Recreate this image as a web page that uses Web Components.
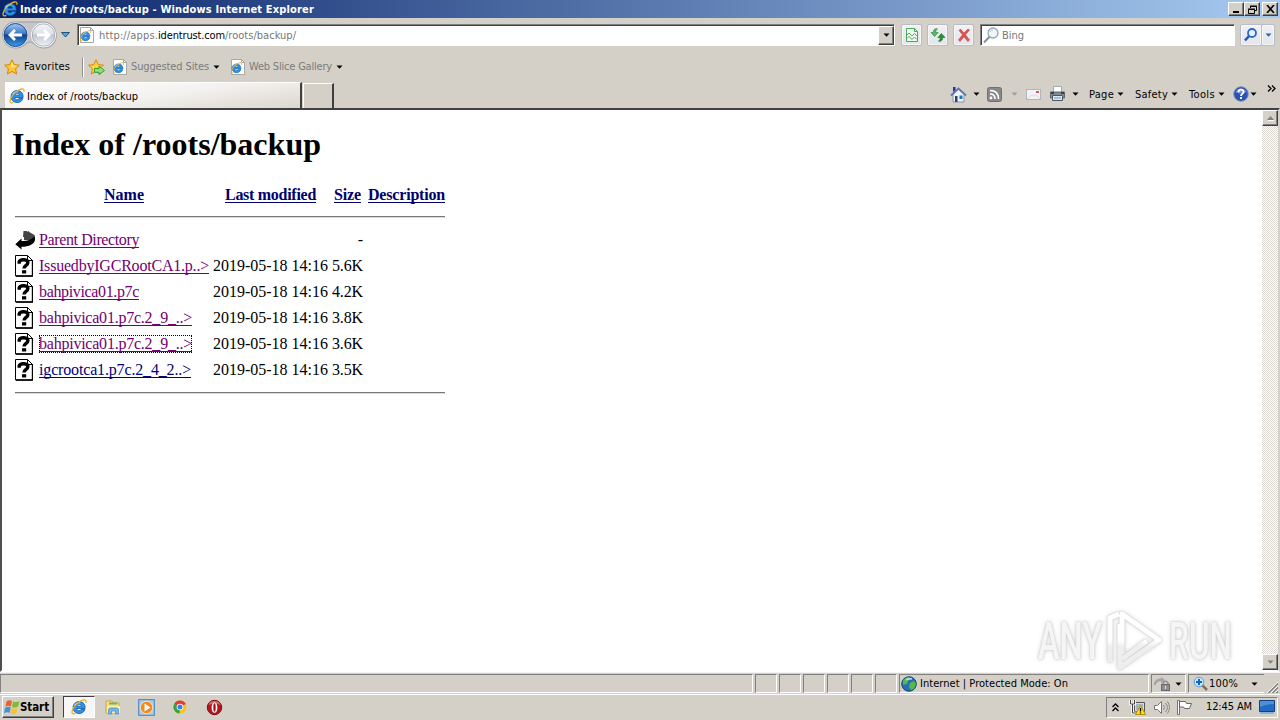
<!DOCTYPE html>
<html lang="en"><head><meta charset="utf-8"><title>Index of /roots/backup</title>
<style>html,body{margin:0;width:1280px;height:720px;overflow:hidden;background:#d4d0c8}</style></head>
<body>
<desktop-screen></desktop-screen>
<script>
const define=(name,html,after)=>customElements.define(name,class extends HTMLElement{
  constructor(){super();this.attachShadow({mode:'open'});}
  connectedCallback(){this.shadowRoot.innerHTML=typeof html==='function'?html(this):html;if(after)after(this);}
});

/* Text with a set width: letter spacing, or a horizontal squeeze, takes up the difference. */
define('fit-text',e=>`<style>:host{display:block;flex:none;white-space:pre;width:${e.getAttribute('w')}px}
:host([link]){background:linear-gradient(currentColor,currentColor) 0 16px/100% 1px no-repeat}
span{display:inline-block;transform-origin:0 50%}</style><span><slot></slot></span>`,e=>{
  const s=e.shadowRoot.querySelector('span'),w=+e.getAttribute('w'),n=s.getBoundingClientRect().width,c=e.textContent.length;
  if(e.hasAttribute('squeeze'))s.style.transform=`scaleX(${w/n})`;
  else s.style.letterSpacing=(w-n)/Math.max(1,c)+'px';
});

const ie=`<path d="M13.800 10.500H9.900c-.4.900-1 1.300-1.900 1.300-1.300 0-2.100-.9-2.200-2.300h8.300C14.300 5.200 12 2.600 8.300 2.600 4.700 2.600 2.100 5 2.100 8.600s2.500 5.900 6 5.900c2.900 0 5-1.500 5.700-4zM5.900 7.200C6.100 6 6.900 5.300 8.200 5.300c1.300 0 2.100.7 2.200 1.900z" fill="#2f93e4" stroke="#0f55a8" stroke-width=".8"/><path d="M3.500 6.500C4.700 4.200 7 3.500 9.200 3.900" stroke="#8fdcff" stroke-width="1.200" fill="none"/><path d="M4.200 14.300C1.200 15.800.300 13.800 1.700 10.600 3.700 6 8.500 1.800 12.400 1c2.400-.5 3 .9 2.300 2.800" fill="none" stroke="#e6b12c" stroke-width="1.300"/>`;
const page=`<path d="M1.500.500h10l3 3v12h-13z" fill="#fff" stroke="#a5a7a8"/><path d="M11.500.500v3h3" fill="none" stroke="#a5a7a8"/>`;
const star='M8 .800l2.200 4.800 5.200.600-3.800 3.600 1 5.200L8 12.400 3.400 15l1-5.200L.600 6.200l5.200-.600z';
const ICONS={
ie:[16,16,ie],
iepage:[16,16,page+`<g transform="translate(.500 3) scale(.74)">${ie}</g>`],
star:[16,16,`<path d="${star}" fill="#ffc62e" stroke="#d9860d"/><path d="M8 3l1.300 3.500 3.700.500-6 1.500z" fill="#fff0a0"/>`],
addstar:[17,16,`<path d="${star}" fill="#ffd13c" stroke="#d9860d"/><path d="M6.500 9.500H11V7.200l5.500 4.300L11 15.500V13.300H6.500z" fill="#8ee07c" stroke="#239a2b" stroke-width=".9"/>`],
nav:[57,30,`<defs><linearGradient id="b" x2="0" y2="1"><stop stop-color="#a9cdf2"/><stop offset=".45" stop-color="#3b78c6"/><stop offset=".5" stop-color="#0e3f92"/><stop offset="1" stop-color="#3fa6ee"/></linearGradient><linearGradient id="f" x2="0" y2="1"><stop stop-color="#f7f8fa"/><stop offset=".45" stop-color="#dcdfe6"/><stop offset=".5" stop-color="#bfc5cf"/><stop offset="1" stop-color="#f4f6f9"/></linearGradient></defs><path d="M14 2h28c17 0 18 26 1 26-8 0-10-6-14-6s-6 6-14 6C-3 28-2 2 14 2z" fill="#c5c5ca" stroke="#9b9ba4"/><circle cx="14.500" cy="15" r="12.200" fill="url(#b)" stroke="#e4eefa"/><circle cx="14.500" cy="15" r="11.500" fill="none" stroke="#234a87"/><circle cx="42.500" cy="15" r="12" fill="url(#f)" stroke="#fff"/><circle cx="42.500" cy="15" r="11.200" fill="none" stroke="#9ba2b0" stroke-width=".8"/><path d="M21 15H9.500M14 10l-5 5 5 5" stroke="#fff" stroke-width="2.800" fill="none"/><path d="M36 15h11M43 10l5 5-5 5" stroke="#fff" stroke-width="2.800" fill="none"/>`],
bluedown:[11,8,`<path d="M1.500 1.500h8L5.500 6z" fill="#5ba3d4" stroke="#1d5384"/>`],
down:[7,4,`<path d="M.500.500h6l-3 3.200z" fill="currentColor"/>`],
up:[7,5,`<path d="M0 4h7L3.500 0z" fill="#808080"/><path d="M1 4.500h7" stroke="#fff"/>`],
compat:[16,16,`<path d="M2.500 1.500h8l3 3v10h-11z" fill="#effaef" stroke="#49a85a"/><path d="M10.500 1.500v3h3" fill="none" stroke="#49a85a"/><path d="M3 8l2-2 3 3 2.500-2.500L13 9M3 11.500l2-2 3 3 2.500-2.500L13 12.500" stroke="#4bad58" fill="none"/>`],
refresh:[16,16,`<path d="M6.500 1.500C4 2 3.300 3.500 3.300 5.500H1l3.600 4 3.600-4H5.800C5.800 4 6 3 7.500 2z" fill="#5cb860" stroke="#278335" stroke-width=".6"/><path d="M9.500 14.500c2.500-.5 3.200-2 3.200-4H15l-3.600-4-3.600 4h2.400c0 1.500-.2 2.500-1.700 3.500z" fill="#2c8e3a" stroke="#1c702b" stroke-width=".6"/>`],
stop:[16,16,`<path d="M3 3.500l1.500-1.500L8 6l4-4 1.500 1L9.500 7.700l4 5.300-1.700 1.500L8 9.800l-4 4.700L2.500 13l4-5.200z" fill="#df5550" stroke="#b92f31" stroke-width=".5"/>`],
lens:[17,17,`<circle cx="10" cy="6" r="5" fill="#f2f6fa" stroke="#98a5b2" stroke-width="1.300"/><path d="M6.500 9.800L1 15.500" stroke="#889099" stroke-width="2"/><path d="M7 5q1-2 3-2" stroke="#b4c9dd" fill="none"/>`],
bluelens:[16,16,`<circle cx="9" cy="6" r="4" fill="#e5f2ff" stroke="#2c67c8" stroke-width="1.800"/><path d="M6 9l-4 4.500" stroke="#2558b8" stroke-width="2.600"/>`],
home:[17,17,`<path d="M3 8v8h11V8L8.500 3z" fill="#eef1f6" stroke="#8a97ab"/><path d="M1 9.500L8.500 2.500 16 9.500" fill="none" stroke="#5a78b4" stroke-width="1.800"/><path d="M3 1h2.500v3L3 6z" fill="#2a2fa8"/><path d="M5 10h2.500v6H5z" fill="#303f70"/><path d="M9.500 9.500h3v3.500h-3z" fill="#1e78b4"/>`],
rss:[15,15,`<rect x=".500" y=".500" width="14" height="14" rx="2" fill="#898989" stroke="#707070"/><circle cx="4" cy="11" r="1.400" fill="#fff"/><path d="M3 7q5 0 5 5M3 3.500q8.500 0 8.500 8.500" stroke="#fff" stroke-width="1.700" fill="none"/>`],
mail:[15,11,`<rect x=".500" y=".500" width="14" height="10" fill="#f3f3f5" stroke="#b4b4bc"/><path d="M1 10l5-4 2 1 2-1 4 4" fill="none" stroke="#dadae0"/><path d="M10 2h3v2h-3z" fill="#cc5c68"/>`],
printer:[17,16,`<path d="M4.500.500h8v6h-8z" fill="#fff" stroke="#9faab5"/><path d="M1.500 6h14v6h-14z" fill="#848a91" stroke="#5e656c"/><path d="M2 7h3M12 7h3" stroke="#3b4047" stroke-width="2"/><path d="M3.500 9.500h10v5h-10z" fill="#dce9f4" stroke="#4e5660"/><path d="M5 12h7" stroke="#5c9ad0"/>`],
help:[16,16,`<circle cx="8" cy="8" r="7.300" fill="#2c51b4" stroke="#8294c0"/><path d="M2.500 6a6 6 0 0 1 11 0Q8 9 2.500 6z" fill="#6f92da"/><path d="M5.500 6.200C5.500 2.800 10.500 3 10.500 6 10.500 8 8 7.800 8 10" stroke="#fff" stroke-width="1.800" fill="none"/><path d="M7 11h2v2H7z" fill="#fff"/>`],
chev:[9,7,`<path d="M1 .500l3 3-3 3M5 .500l3 3-3 3" stroke="#000" stroke-width="1.300" fill="none"/>`],
chevup:[7,9,`<path d="M.500 4l3-3 3 3M.500 8l3-3 3 3" stroke="#000" stroke-width="1.300" fill="none"/>`],
back:[21,20,`<path d="M8.500 1h3l1 .800 1-.800 1.500 1.500L19.500 5v5H9V7H8z" fill="#444"/><path d="M19.700 5.500C18.500 9 13 11 6.500 11V8.500L.300 14.300l6.200 5.200v-2.700C14 16.800 20 14 20 9.500z" fill="#000"/>`],
unknown:[18,22,`<path d="M.500.500h12l5 5v15.500H.500z" fill="#fff" stroke="#000"/><path d="M1 21h16.500V5" stroke="#000" fill="none" stroke-width="1.400"/><path d="M12.500.500v5h5" fill="none" stroke="#000"/><path d="M4.200 8.700V7C5 3.800 13 3.800 12.900 7.700 12.800 10.300 9 10.500 9 13.500" fill="none" stroke="#000" stroke-width="3.400"/><path d="M7 15.200h4.200v3.300H7z"/>`],
globe:[16,16,`<circle cx="8" cy="8" r="7.300" fill="#2270b8" stroke="#174774"/><path d="M2 5Q4 1 8 1l2 2-3 2-1 3-4 1zM9 7l4-2 2 3-2 5-3 1-2-3z" fill="#58b848"/><path d="M5 4q3-2 6-1" stroke="#b7e7ff" fill="none" stroke-width="1.500"/>`],
lock:[18,14,`<path d="M0 8Q3 2 8 3" stroke="#a4a4a4" stroke-width="2.500" fill="none"/><path d="M7 0l4 3-4 3z" fill="#a4a4a4"/><path d="M9 8V6q2.500-3.500 5 0v2" stroke="#888" fill="none" stroke-width="1.400"/><rect x="7.500" y="7.500" width="8" height="6" fill="#8f8f8f" stroke="#686868"/><path d="M11.500 9v3" stroke="#ddd"/>`],
zoom:[15,15,`<circle cx="6" cy="6" r="4.800" fill="#c8e6fb" stroke="#5ba0da"/><path d="M6 3v6M3 6h6" stroke="#1263c4" stroke-width="2"/><path d="M9.500 9.500L14 14" stroke="#8b6b51" stroke-width="2.500"/>`],
grip:[12,12,`<path d="M1 12L12 1M5 12l7-7M9 12l3-3" stroke="#fff" stroke-width="1"/><path d="M2 12.500L12.500 2M6 12.500L12.500 6M10 12.500L12.500 10" stroke="#808080" stroke-width="1.400"/>`],
win:[16,16,`<path d="M2.500 2.500Q5 .500 8 2L7 7.500Q4 6 1.300 8z" fill="#e9652c"/><path d="M9 2.500q3 1.200 6.500-.300L14 7.700q-3 1.500-6 .200z" fill="#83b93b"/><path d="M1 9q3-2 5.800-.500L5.500 14Q3 12.500 0 14.500z" fill="#4591d7"/><path d="M7.700 9q3 1.500 6 0L12.300 14.500q-3 1.500-5.800-.200z" fill="#f3c62e"/>`],
folder:[18,16,`<path d="M2 2h6l1 2h6v10H2z" fill="#f5df86" stroke="#cba942"/><path d="M5 4.500h8" stroke="#72b850" stroke-width="2"/><path d="M3 7h13v7H3z" fill="#fbeeb0"/><path d="M4.500 15v-4q0-2 2-2h6q2 0 2 2v4h-3v-3h-4v3z" fill="#73b9e9" stroke="#3e88bf" stroke-width=".7"/>`],
media:[17,17,`<rect x=".700" y=".700" width="15.600" height="15.600" fill="#a7cdeb" stroke="#3f80bf"/><circle cx="8.500" cy="8.500" r="6.200" fill="#f28a1d" stroke="#fff1d4" stroke-width=".8"/><path d="M6.500 4.500l6 4-6 4z" fill="#fff"/>`],
chrome:[16,16,`<circle cx="8" cy="8" r="6.600" fill="#f8c51d"/><path d="M8 8L2.300 4.700A6.600 6.600 0 0 1 13.800 5z" fill="#df3b2f"/><path d="M8 8L2.300 4.700A6.600 6.600 0 0 0 7.500 14.600z" fill="#2fa34b"/><circle cx="8" cy="8" r="3.300" fill="#fff"/><circle cx="8" cy="8" r="2.500" fill="#3f7ddd"/>`],
opera:[17,17,`<circle cx="8.500" cy="8.500" r="7.200" fill="#b5161c" stroke="#7c0d11"/><path d="M2.500 6q1-4 6-4t6 4q-6-3-12 0z" fill="#dd6468"/><ellipse cx="8.500" cy="8.500" rx="2.900" ry="5.300" fill="#fff"/><ellipse cx="8.500" cy="8.500" rx="1.200" ry="4.200" fill="#a3141a"/>`],
net:[17,16,`<path d="M5.500 3.500h10v9h-10z" fill="#d6dadd" stroke="#555"/><path d="M7 5h7v6H7z" fill="#a9b4bc"/><path d="M1.500 1v4h4V1M3.500 5v9H9" fill="none" stroke="#fff" stroke-width="2.500"/><path d="M1.500 1v4h4V1M3.500 5v9H9" fill="none" stroke="#444"/><path d="M11.500 6.500l5 9h-10z" fill="#ffdb21" stroke="#b29110"/><path d="M11.500 9v3.500M11.500 13.500v1" stroke="#000" stroke-width="1.300"/>`],
speaker:[17,15,`<path d="M1.500 5.500h3l4-4v12l-4-4h-3z" fill="#fff" stroke="#777"/><path d="M10.500 5q2 2.500 0 5M12.500 3q4 4.500 0 9M14.500 1.500q4 6 0 12" fill="none" stroke="#888"/>`],
flag:[17,16,`<path d="M1.500 1.500h2v14h-2z" fill="#fff" stroke="#666" stroke-width=".9"/><path d="M3.500 2.500h6l1 2h5l-2 5h-5l-1-1.500h-4z" fill="#fff" stroke="#666"/>`],
desk:[16,14,`<path d="M.500.500h15v11H.500z" fill="#266bc3" stroke="#163f80"/><path d="M1 1h14v3Q7 4 1 7z" fill="#4f8fd6"/><path d="M1 13h14" stroke="#73a7d9" stroke-width="1.500"/>`],
min:[8,8,`<path d="M1 7h6" stroke="#000" stroke-width="2"/>`],
restore:[9,9,`<path d="M2.500 3V1.500h6v4H7M2 1h7M.500 4.500h6v4h-6zM0 4h7" fill="none" stroke="#000"/>`],
close:[9,8,`<path d="M1 0l7 8M8 0L1 8" stroke="#000" stroke-width="1.700"/>`]
};
define('ui-icon',e=>{const[w,h,b]=ICONS[e.getAttribute('name')];return `<style>:host{display:block;flex:none;width:${w}px;height:${h}px}svg{display:block}</style><svg width="${w}" height="${h}" viewBox="0 0 ${w} ${h}">${b}</svg>`;});

/* Classic raised button face. */
define('raised-button',`<style>:host{display:flex;flex:none;align-items:center;justify-content:center;box-sizing:border-box;background:#d4d0c8;border:1px solid;border-color:#fff #404040 #404040 #fff;box-shadow:inset -1px -1px #808080}</style><slot></slot>`);
define('soft-button',`<style>:host{display:flex;flex:none;align-items:center;justify-content:center;box-sizing:border-box;width:22px;height:22px;background:linear-gradient(#f0f1f3,#e2e5ea);border:1px solid #b7bcc6;border-radius:2px;box-shadow:inset 0 0 0 1px #f7f7f7}</style><slot></slot>`);

define('title-bar',`<style>:host{display:flex;align-items:center;height:18px;box-sizing:border-box;padding:0 2px;background:linear-gradient(90deg,#0a246a,#a6caf0);color:#fff}
fit-text{font:bold 11px/18px "DejaVu Sans Condensed","DejaVu Sans",sans-serif;margin-left:2px;padding-top:1px}raised-button{width:16px;height:14px}.first{margin-left:auto}.close{margin-left:2px}</style>
<ui-icon name="ie"></ui-icon><fit-text w="294">Index of /roots/backup - Windows Internet Explorer</fit-text>
<raised-button class="first"><ui-icon name="min"></ui-icon></raised-button><raised-button><ui-icon name="restore"></ui-icon></raised-button><raised-button class="close"><ui-icon name="close"></ui-icon></raised-button>`);

define('nav-bar',`<style>:host{display:flex;align-items:center;height:35px;box-sizing:border-box;padding:0 5px 1px 1px}
.field{display:flex;align-items:center;box-sizing:border-box;height:22px;background:#fff;border:1px solid;border-color:#808080 #fff #fff #808080;box-shadow:inset 1px 1px #404040;color:#777}
.addr{width:818px;margin-left:6px;padding-left:1px}.addr fit-text:first-of-type{margin-left:4px}.addr .host{color:#000}.addr raised-button{margin-left:auto;width:16px;height:19px;color:#000}
fit-text{padding-top:2px}
.bing{width:255px;margin-left:6px;padding-left:2px}soft-button{margin-left:5px;width:21px}soft-button.a{margin-left:6px}
.go{display:flex;margin-left:5px;width:35px}.go soft-button{margin:0}.go .dd{width:14px;margin-left:-1px;color:#2a63b5}.go .s{width:22px}
.tri{margin-left:2px}</style>
<ui-icon name="nav"></ui-icon><ui-icon class="tri" name="bluedown"></ui-icon>
<div class="field addr"><ui-icon name="iepage"></ui-icon><fit-text w="59">http://apps.</fit-text><fit-text class="host" w="67">identrust.com</fit-text><fit-text w="71">/roots/backup/</fit-text><raised-button><ui-icon name="down"></ui-icon></raised-button></div>
<soft-button class="a"><ui-icon name="compat"></ui-icon></soft-button><soft-button><ui-icon name="refresh"></ui-icon></soft-button><soft-button><ui-icon name="stop"></ui-icon></soft-button>
<div class="field bing"><ui-icon name="lens"></ui-icon><fit-text w="22" style="margin-left:2px">Bing</fit-text></div>
<div class="go"><soft-button class="s"><ui-icon name="bluelens"></ui-icon></soft-button><soft-button class="dd"><ui-icon name="down"></ui-icon></soft-button></div>`);

define('favorites-bar',`<style>:host{display:flex;align-items:center;height:28px;padding-left:4px}.g{color:#7b7b7b}.sep{width:1px;height:19px;background:#8f8f8f;border-right:1px solid #fff;margin:0 4px 0 12px}fit-text{margin-left:4px}.d{margin-left:4px}.p{margin-left:7px}.q{margin-left:10px}</style>
<ui-icon name="star"></ui-icon><fit-text w="46">Favorites</fit-text><div class="sep"></div><ui-icon name="addstar"></ui-icon>
<ui-icon class="p" name="iepage"></ui-icon><fit-text class="g" style="margin-left:3px" w="78">Suggested Sites</fit-text><ui-icon class="d" name="down"></ui-icon>
<ui-icon class="q" name="iepage"></ui-icon><fit-text class="g" style="margin-left:3px" w="83">Web Slice Gallery</fit-text><ui-icon class="d" name="down"></ui-icon>`);

define('tab-row',`<style>:host{display:flex;align-items:flex-end;height:27px;padding-left:5px}
.tab{display:flex;align-items:center;width:297px;height:26px;box-sizing:border-box;padding-left:4px;background:linear-gradient(172deg,#fff,#f4f2f0 50%,#dbd7d0);border-top:1px solid #fff;border-right:2px solid #404040}
.new{width:31px;height:25px;box-sizing:border-box;border:1px solid #fff;border-bottom:0;border-right:2px solid #404040;margin-left:1px}
.cmd{display:flex;align-items:center;height:28px;margin-left:auto;padding-right:4px}.cmd>*{margin-left:var(--m)}.off{color:#9d9d9d}fit-text{padding-top:2px}</style>
<div class="tab"><ui-icon name="ie"></ui-icon><fit-text style="margin-left:2px" w="111">Index of /roots/backup</fit-text></div><div class="new"></div>
<div class="cmd"><ui-icon name="home"></ui-icon><ui-icon name="down" style="--m:6px"></ui-icon><ui-icon name="rss" style="--m:7px"></ui-icon><ui-icon name="down" class="off" style="--m:9px"></ui-icon><ui-icon name="mail" style="--m:8px"></ui-icon><ui-icon name="printer" style="--m:8px"></ui-icon><ui-icon name="down" style="--m:6px"></ui-icon>
<fit-text w="25" style="--m:10px">Page</fit-text><ui-icon name="down" style="--m:3px"></ui-icon><fit-text w="33" style="--m:11px">Safety</fit-text><ui-icon name="down" style="--m:3px"></ui-icon><fit-text w="26" style="--m:11px">Tools</fit-text><ui-icon name="down" style="--m:3px"></ui-icon><ui-icon name="help" style="--m:8px"></ui-icon><ui-icon name="down" style="--m:1px"></ui-icon><ui-icon name="chev" style="--m:10px;margin-bottom:12px"></ui-icon></div>`);

define('file-row',e=>`<style>:host{display:grid;grid-template-columns:24px 174px 119px 31px;height:26px;align-items:center}
a{display:block;justify-self:start;line-height:18px;height:18px;color:#720072}
:host([fresh]) a{color:#00007b}:host([focused]) a{outline:1px dotted #000;outline-offset:-1px}.s{justify-self:end}</style>
<ui-icon name="${e.getAttribute('icon')}"></ui-icon><a><slot></slot></a>${e.hasAttribute('date')?`<fit-text w="115">${e.getAttribute('date')}</fit-text>`:'<span></span>'}<span class="s">${e.hasAttribute('date')?`<fit-text w="31">${e.getAttribute('size')}</fit-text>`:e.getAttribute('size')}</span>`);

define('web-page',`<style>:host{display:block;flex:1;background:#fff;color:#000;font:16px/18px "Liberation Serif",serif;padding:16px 0 0 10px}
h1{font:bold 32px/37px "Liberation Serif",serif;margin:0 0 21px}main{width:430px;margin-left:3px}
.head{display:flex;height:21px;align-items:center;color:#00006e;font-weight:bold;padding-left:89px}
.head fit-text{margin-left:var(--m)}.line{height:1px;background:#777;border-bottom:1px solid #ddd}</style>
<h1><fit-text w="309">Index of /roots/backup</fit-text></h1><main>
<div class="head"><fit-text link w="40">Name</fit-text><fit-text link w="91" style="--m:81px">Last modified</fit-text><fit-text link w="27" style="--m:18px">Size</fit-text><fit-text link w="77" style="--m:7px">Description</fit-text></div>
<div class="line" style="margin:11px 0 9px"></div>
<file-row icon="back" size="-"><fit-text link w="100">Parent Directory</fit-text></file-row>
<file-row icon="unknown" date="2019-05-18 14:16" size="5.6K"><fit-text link w="170">IssuedbyIGCRootCA1.p..&gt;</fit-text></file-row>
<file-row icon="unknown" date="2019-05-18 14:16" size="4.2K"><fit-text link w="100">bahpivica01.p7c</fit-text></file-row>
<file-row icon="unknown" date="2019-05-18 14:16" size="3.8K"><fit-text link w="153">bahpivica01.p7c.2_9_..&gt;</fit-text></file-row>
<file-row focused icon="unknown" date="2019-05-18 14:16" size="3.6K"><fit-text link w="153">bahpivica01.p7c.2_9_..&gt;</fit-text></file-row>
<file-row fresh icon="unknown" date="2019-05-18 14:16" size="3.5K"><fit-text link w="152">igcrootca1.p7c.2_4_2..&gt;</fit-text></file-row>
<div class="line" style="margin-top:9px"></div></main>`);

define('scroll-bar',`<style>:host{display:flex;flex-direction:column;justify-content:space-between;width:16px;background:repeating-conic-gradient(#fff 0 25%,#dcd8d1 0 50%) 0 0/2px 2px}raised-button{height:16px;width:16px}.d{color:#808080}</style><raised-button><ui-icon name="up"></ui-icon></raised-button><raised-button><ui-icon class="d" name="down"></ui-icon></raised-button>`);

define('watermark-logo',`<style>:host{display:flex;align-items:center;position:absolute;left:1038px;top:610px;height:61px;font:500 52px/61px Roboto,sans-serif;filter:drop-shadow(0 0 1px #c8c8c8) drop-shadow(0 0 2px #ddd)}
fit-text{color:#f5f5f5;padding-top:2px}svg{display:block;margin:0 6px 0 3px}</style>
<fit-text squeeze w="64">ANY</fit-text><svg width="58" height="61" viewBox="0 0 58 61"><defs><linearGradient id="w" gradientUnits="userSpaceOnUse" x1="0" y1="0" x2="0" y2="61"><stop offset=".5" stop-color="#fff"/><stop offset=".6" stop-color="#eee"/></linearGradient></defs><path d="M5 52V8l9-4M17 44V4L54 30 15 57V14M17 49L42 31" stroke="url(#w)" stroke-width="5" fill="none" stroke-linejoin="round"/></svg><fit-text squeeze w="63">RUN</fit-text>`);

define('status-bar',`<style>:host{display:flex;height:19px;gap:2px;padding:1px 0 1px;border-top:1px solid #f5f4f2}
.p{display:flex;align-items:center;box-sizing:border-box;border:1px solid;border-color:#808080 #fff #fff #808080;flex:none}.s{width:22px}</style>
<div class="p" style="width:753px"></div><div class="p s"></div><div class="p s"></div><div class="p s"></div><div class="p s"></div><div class="p s"></div><div class="p s"></div>
<div class="p" style="width:250px;padding-left:1px"><ui-icon name="globe"></ui-icon><fit-text w="148" style="margin-left:3px">Internet | Protected Mode: On</fit-text></div>
<div class="p" style="width:35px;padding-left:2px"><ui-icon name="lock"></ui-icon><ui-icon name="down" style="margin-left:3px"></ui-icon></div>
<div class="p" style="width:76px;padding-left:4px;border-right:0"><ui-icon name="zoom"></ui-icon><fit-text w="29" style="margin-left:1px">100%</fit-text><ui-icon name="down" style="margin-left:13px"></ui-icon></div><ui-icon name="grip" style="margin-top:7px"></ui-icon>`);

define('task-bar',`<style>:host{display:flex;align-items:center;flex:1;box-sizing:border-box;border-top:1px solid #fff;padding:0 2px 1px}
.start{width:52px;height:22px}.start fit-text{font:bold 11.5px/18px "DejaVu Sans Condensed","DejaVu Sans",sans-serif;margin:0 3px 0 0}
.on{display:flex;align-items:center;justify-content:center;box-sizing:border-box;width:32px;height:22px;margin-left:9px;background:#f7f6f4;border:1px solid;border-color:#404040 #fff #fff #404040}
.tray{display:flex;align-items:center;margin-left:auto;box-sizing:border-box;width:172px;height:21px;border:1px solid;border-color:#808080 #fff #fff #808080;padding-left:5px}.tray>*,.i{margin-left:var(--m)}</style>
<raised-button class="start"><ui-icon name="win"></ui-icon><fit-text w="29">Start</fit-text></raised-button><div class="on"><ui-icon name="ie"></ui-icon></div>
<ui-icon class="i" name="folder" style="--m:9px"></ui-icon><ui-icon class="i" name="media" style="--m:16px"></ui-icon><ui-icon class="i" name="chrome" style="--m:17px"></ui-icon><ui-icon class="i" name="opera" style="--m:18px"></ui-icon>
<div class="tray"><ui-icon name="chevup"></ui-icon><ui-icon name="net" style="--m:10px"></ui-icon><ui-icon name="speaker" style="--m:7px"></ui-icon><ui-icon name="flag" style="--m:6px"></ui-icon><fit-text w="46" style="--m:13px">12:45 AM</fit-text><ui-icon name="desk" style="--m:7px"></ui-icon></div>`);

define('desktop-screen',`<style>:host{display:flex;flex-direction:column;width:1280px;height:720px;position:relative;background:#d4d0c8;color:#000;font:11px/14px "DejaVu Sans Condensed","DejaVu Sans",sans-serif}
.view{display:flex;height:560px;border:2px solid;border-color:#404040 #d4d0c8 #fff #404040;border-left-color:#505050;flex:none}</style>
<title-bar></title-bar><nav-bar></nav-bar><favorites-bar></favorites-bar><tab-row></tab-row>
<div class="view"><web-page></web-page><scroll-bar></scroll-bar></div>
<status-bar></status-bar><task-bar></task-bar><watermark-logo></watermark-logo>`);
</script></body></html>
